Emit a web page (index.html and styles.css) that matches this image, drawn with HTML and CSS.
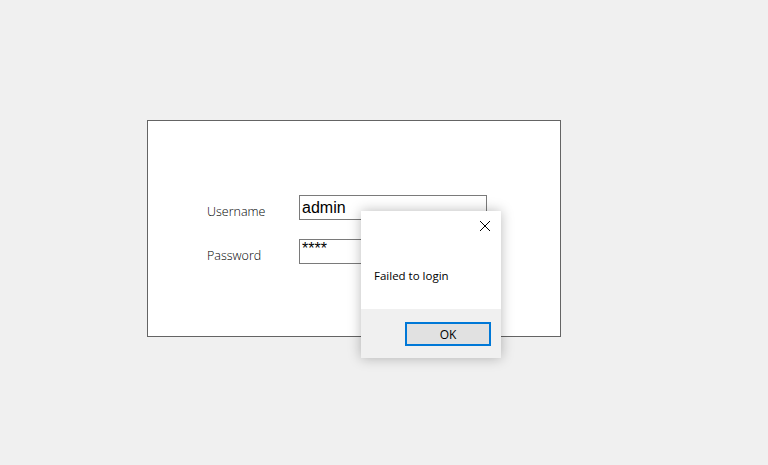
FILE: index.html
```html
<!DOCTYPE html>
<html lang="en">
<head>
<meta charset="UTF-8">
<meta name="viewport" content="width=device-width, initial-scale=1.0">
<title>Login</title>
<link rel="stylesheet" href="styles.css">
</head>
<body>

<div class="login-box">
    <div class="form-row">
        <label class="form-label" for="user">Username</label>
        <input class="form-input" id="user" type="text" value="admin">
    </div>
    <div class="form-row">
        <label class="form-label" for="pass">Password</label>
        <input class="form-input form-pass" id="pass" type="text" value="****">
    </div>
</div>

<div class="msgbox">
    <div class="msgbox-body">
        <div class="msgbox-top">
            <svg class="msgbox-close" width="12" height="12" viewBox="0 0 12 12">
                <path d="M1 1 L11 11 M11 1 L1 11" stroke="#000" stroke-width="1" fill="none"/>
            </svg>
        </div>
        <div class="msgbox-text">Failed to login</div>
    </div>
    <div class="msgbox-footer">
        <button class="msgbox-button">OK</button>
    </div>
</div>

</body>
</html>
```

FILE: styles.css
```css
body {
    margin: 0;
    padding: 0;
    background-color: #f0f0f0;
    font-family: "Open Sans", "Noto Sans", sans-serif;
    height: 465px;
    position: relative;
    overflow: hidden;
}
.login-box {
    margin-left: 147px;
    margin-top: 120px;
    width: 412px;
    height: 141px;
    border: 1px solid #646464;
    background-color: #fff;
    padding-top: 74px;
    box-sizing: content-box;
}
.form-row {
    display: flex;
    align-items: flex-start;
    margin-bottom: 19px;
}
.form-label {
    width: 92px;
    margin-left: 59px;
    margin-top: 8px;
    font-size: 12.5px;
    line-height: 17px;
    font-weight: 300;
    color: #000;
}
.form-input {
    width: 188px;
    height: 25px;
    box-sizing: border-box;
    border: 1px solid #7a7a7a;
    padding: 2px 2px 1px 2px;
    font-family: "Liberation Sans", Arial, sans-serif;
    font-size: 16px;
    color: #000;
    outline: none;
    margin: 0;
}
.form-pass {
    padding-top: 0;
    padding-bottom: 6px;
    line-height: 16px;
}
.msgbox {
    position: absolute;
    left: 361px;
    top: 211px;
    width: 140px;
    height: 147px;
    background-color: #f0f0f0;
    box-shadow: 0 0 12px rgba(0, 0, 0, 0.28);
    font-family: "Open Sans", "Noto Sans", sans-serif;
    font-size: 11.5px;
    display: flex;
    flex-direction: column;
}
.msgbox-body {
    background-color: #fff;
    height: 98px;
}
.msgbox-top {
    display: flex;
    justify-content: flex-end;
    padding: 9px 10px 0 0;
}
.msgbox-close {
    display: block;
}
.msgbox-text {
    margin-top: 36px;
    margin-left: 13px;
    color: #000;
}
.msgbox-footer {
    display: flex;
    justify-content: flex-end;
    padding: 13px 10px 0 0;
}
.msgbox-button {
    width: 86px;
    height: 24px;
    background-color: #e1e1e1;
    border: 2px solid #0078d7;
    font-family: "Open Sans", "Noto Sans", sans-serif;
    font-size: 12px;
    color: #000;
    padding: 0;
}
```
